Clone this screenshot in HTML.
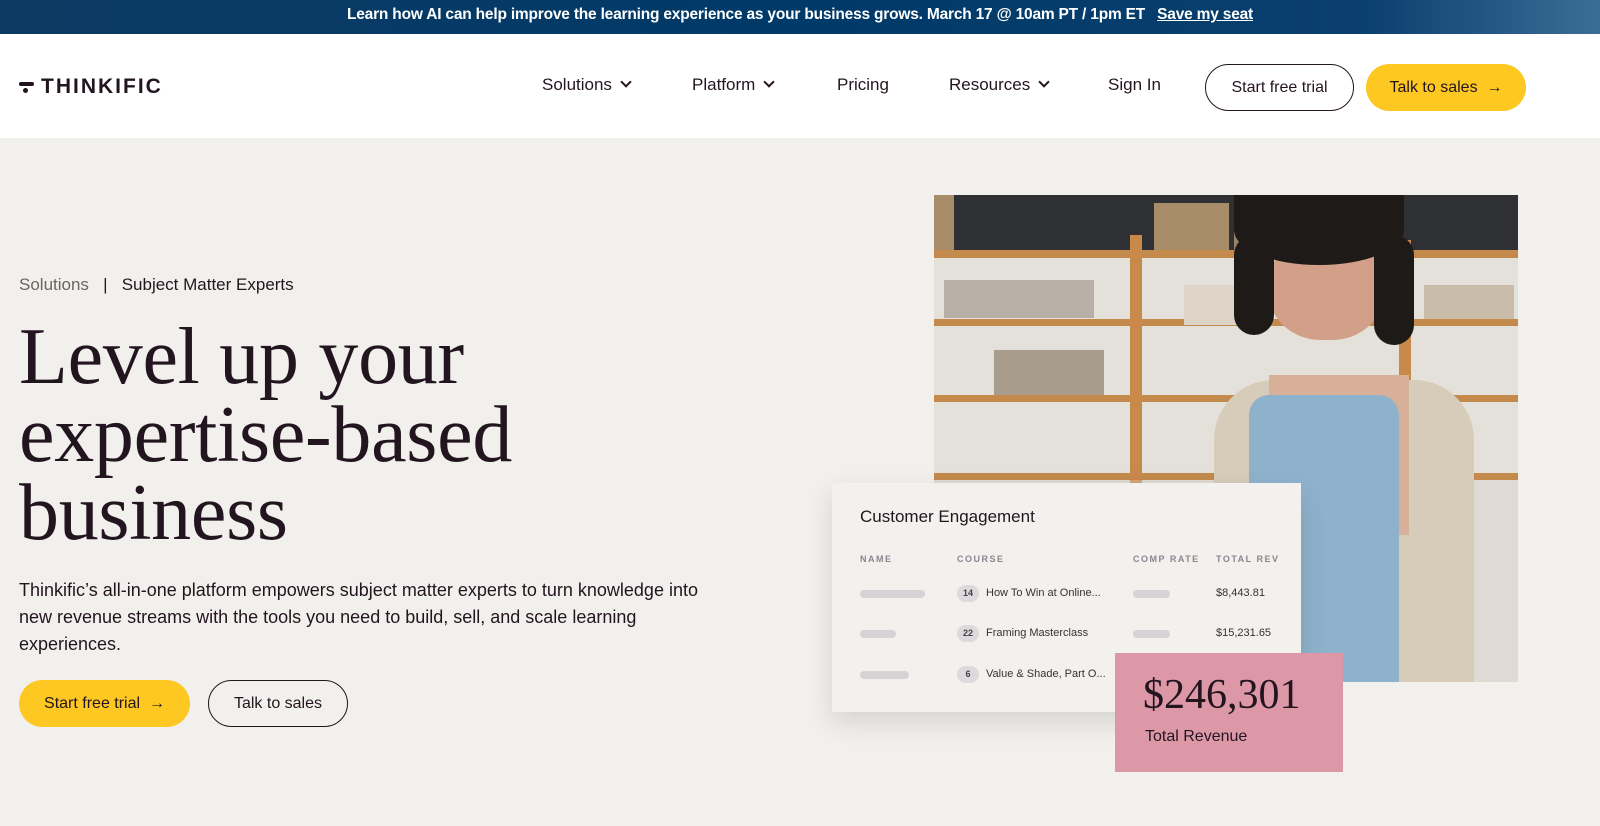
<!DOCTYPE html>
<html><head><meta charset="utf-8">
<style>
*{margin:0;padding:0;box-sizing:border-box}
body{width:1600px;height:826px;overflow:hidden;background:#f2f0ec;font-family:"Liberation Sans",sans-serif;color:#231520;position:relative}
.banner{position:absolute;left:0;top:0;width:1600px;height:34px;background:linear-gradient(90deg,#0d3a63,#003a68 50%,#0a3f6e 85%,#3a6d96);color:#fff;font-size:15.5px;font-weight:bold;text-align:center;line-height:30px;letter-spacing:-0.2px}
.banner u{margin-left:8px}
.nav{position:absolute;top:34px;left:0;width:1600px;height:104px;background:#fff}
.logo{position:absolute;left:19px;top:41px;font-size:21px;font-weight:bold;letter-spacing:2px;color:#231520}
.nav .it{position:absolute;top:41px;font-size:17px;color:#231520}
.chev{display:inline-block;width:8px;height:8px;border-right:2px solid #231520;border-bottom:2px solid #231520;transform:rotate(45deg);margin-left:10px;position:relative;top:-4px}
.btn{position:absolute;border-radius:24px;font-size:16px;text-align:center}
.hero-h{position:absolute;left:19px;top:318px;font-family:"Liberation Serif",serif;font-size:80px;line-height:78px;color:#231520;letter-spacing:-0.3px}
.crumb{position:absolute;left:19px;top:275px;font-size:17px}
.para{position:absolute;left:19px;top:577px;width:705px;font-size:18px;line-height:27px;color:#231520}
.photo{position:absolute;left:934px;top:195px;width:584px;height:487px;background:#e4e0da;overflow:hidden}
.photo div{position:absolute}
.card{position:absolute;left:832px;top:483px;width:469px;height:229px;background:#f2f1ed;box-shadow:0 10px 25px rgba(0,0,0,.12)}
.card .h{position:absolute;left:28px;top:24px;font-size:17px}
.th{position:absolute;top:71px;font-size:9px;letter-spacing:1.5px;color:#8a8590;font-weight:bold}
.bar{position:absolute;height:8px;border-radius:4px;background:#d5d3d6}
.num{position:absolute;width:22px;height:17px;border-radius:9px;background:#dcdadc;font-size:9px;text-align:center;line-height:17px;font-weight:bold;color:#444}
.ct{position:absolute;font-size:11px;color:#3a3036}
.pink{position:absolute;left:1115px;top:653px;width:228px;height:119px;background:#dd98a8}
</style></head><body>
<div class="banner">Learn how AI can help improve the learning experience as your business grows. March 17 @ 10am PT / 1pm ET <u>Save my seat</u></div>
<div class="nav">
 <div class="logo"><span style="display:inline-block;width:15px;height:4px;background:#231520;border-radius:2px;position:relative;top:-7px;margin-right:2px"></span><span style="display:inline-block;width:5px;height:5px;background:#231520;border-radius:50%;position:relative;left:-13px;top:0px"></span>THINKIFIC</div>
 <div class="it" style="left:542px">Solutions<span class="chev"></span></div>
 <div class="it" style="left:692px">Platform<span class="chev"></span></div>
 <div class="it" style="left:837px">Pricing</div>
 <div class="it" style="left:949px">Resources<span class="chev"></span></div>
 <div class="it" style="left:1108px">Sign In</div>
 <div class="btn" style="left:1205px;top:30px;width:149px;height:47px;border:1px solid #231520;line-height:45px">Start free trial</div>
 <div class="btn" style="left:1366px;top:30px;width:160px;height:47px;background:#fcc821;line-height:47px">Talk to sales &nbsp;→</div>
</div>
<div class="crumb"><span style="color:#6b6460">Solutions</span> &nbsp;&nbsp;|&nbsp;&nbsp; Subject Matter Experts</div>
<div class="hero-h">Level up your<br>expertise-based<br>business</div>
<div class="para">Thinkific’s all-in-one platform empowers subject matter experts to turn knowledge into new revenue streams with the tools you need to build, sell, and scale learning experiences.</div>
<div class="btn" style="left:19px;top:680px;width:171px;height:47px;background:#fcc821;line-height:47px">Start free trial &nbsp;→</div>
<div class="btn" style="left:208px;top:680px;width:140px;height:47px;border:1px solid #231520;line-height:45px">Talk to sales</div>

<div class="photo">
 <div style="left:0;top:0;width:584px;height:55px;background:#2e3034"></div>
 <div style="left:0;top:0;width:20px;height:55px;background:#a88c6a"></div>
 <div style="left:220px;top:8px;width:75px;height:47px;background:#a88c6a"></div>
 <div style="left:300px;top:8px;width:70px;height:47px;background:#9a8266"></div>
 <div style="left:0;top:55px;width:584px;height:8px;background:#c48a4c"></div>
 <div style="left:0;top:124px;width:584px;height:7px;background:#c48a4c"></div>
 <div style="left:0;top:200px;width:584px;height:7px;background:#c48a4c"></div>
 <div style="left:0;top:278px;width:584px;height:7px;background:#c48a4c"></div>
 <div style="left:196px;top:40px;width:12px;height:447px;background:#c8894a"></div>
 <div style="left:465px;top:45px;width:12px;height:440px;background:#c8894a"></div>
 <div style="left:10px;top:85px;width:150px;height:38px;background:#b8b0a6"></div>
 <div style="left:60px;top:155px;width:110px;height:45px;background:#a89c8c"></div>
 <div style="left:490px;top:90px;width:90px;height:34px;background:#c9bca8"></div>
 <div style="left:250px;top:90px;width:80px;height:40px;background:#ddd3c6"></div>
 <div style="left:0;top:285px;width:584px;height:202px;background:#d9d3ca;opacity:.4"></div>
 <div style="left:280px;top:185px;width:260px;height:302px;background:#d7cbb9;border-radius:60px 60px 0 0"></div>
 <div style="left:335px;top:180px;width:140px;height:160px;background:#d8b09a"></div>
 <div style="left:315px;top:200px;width:150px;height:287px;background:#8fb2cc;border-radius:20px 20px 0 0"></div>
 <div style="left:335px;top:40px;width:115px;height:105px;background:#d2a088;border-radius:45%"></div>
 <div style="left:300px;top:0;width:170px;height:70px;background:#1e1a18;border-radius:0 0 50% 50%"></div>
 <div style="left:300px;top:40px;width:40px;height:100px;background:#1e1a18;border-radius:20px"></div>
 <div style="left:440px;top:40px;width:40px;height:110px;background:#1e1a18;border-radius:20px"></div>
</div>

<div class="card">
 <div class="h">Customer Engagement</div>
 <div class="th" style="left:28px">NAME</div><div class="th" style="left:125px">COURSE</div><div class="th" style="left:301px">COMP RATE</div><div class="th" style="left:384px">TOTAL REV</div>
 <div class="bar" style="left:28px;top:107px;width:65px"></div>
 <div class="bar" style="left:28px;top:147px;width:36px"></div>
 <div class="bar" style="left:28px;top:188px;width:49px"></div>
 <div class="num" style="left:125px;top:102px">14</div><div class="ct" style="left:154px;top:104px">How To Win at Online...</div>
 <div class="num" style="left:125px;top:142px">22</div><div class="ct" style="left:154px;top:144px">Framing Masterclass</div>
 <div class="num" style="left:125px;top:183px">6</div><div class="ct" style="left:154px;top:185px">Value &amp; Shade, Part O...</div>
 <div class="bar" style="left:301px;top:107px;width:37px"></div>
 <div class="bar" style="left:301px;top:147px;width:37px"></div>
 <div class="ct" style="left:384px;top:104px">$8,443.81</div>
 <div class="ct" style="left:384px;top:144px">$15,231.65</div>
</div>
<div class="pink">
 <div style="position:absolute;left:28px;top:18px;font-family:'Liberation Serif',serif;font-size:42px;color:#231520">$246,301</div>
 <div style="position:absolute;left:30px;top:75px;font-size:16px;color:#231520">Total Revenue</div>
</div>
</body></html>
